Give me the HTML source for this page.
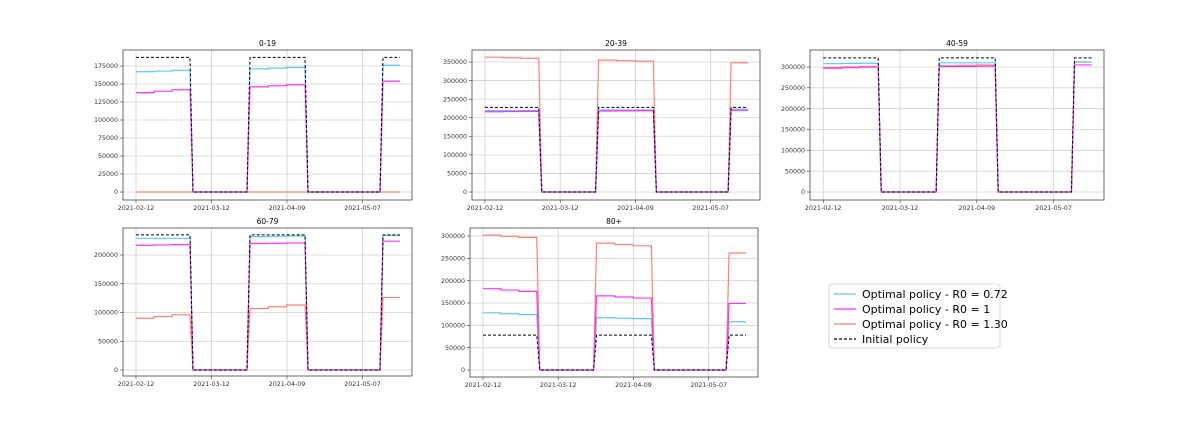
<!DOCTYPE html>
<html><head><style>body{margin:0;background:#fff}svg{display:block}text{font-family:"DejaVu Sans","Liberation Sans",sans-serif}</style></head>
<body>
<svg id="s" width="1196" height="423" xmlns="http://www.w3.org/2000/svg"></svg>
<script>
const S=document.getElementById('s');let h='';
function P(o){
 const {x0,x1,yT,yB,y0,yRef,vRef,ticks,title,series,dash}=o;
 const sy=v=>y0-(v*(y0-yRef)/vRef);
 const w=x1-x0, k=w/289;
 const X=d=>x0+d*k;
 h+=`<text x="${(x0+x1)/2}" y="${yT-4}" font-size="7.5" text-anchor="middle">${title}</text>`;
 for(let i=0;i<4;i++){const tx=X(13+75.5*i);h+=`<line x1="${tx}" y1="${yT}" x2="${tx}" y2="${yB}" stroke="#d0d0d0" stroke-width="0.8"/>`;
  h+=`<line x1="${tx}" y1="${yB}" x2="${tx}" y2="${yB+3}" stroke="#333" stroke-width="0.6"/>`;
  h+=`<text x="${tx}" y="${yB+10}" font-size="6.3" fill="#333" text-anchor="middle">${['2021-02-12','2021-03-12','2021-04-09','2021-05-07'][i]}</text>`;}
 ticks.forEach(v=>{const ty=sy(v);h+=`<line x1="${x0}" y1="${ty}" x2="${x1}" y2="${ty}" stroke="#d0d0d0" stroke-width="0.8"/><line x1="${x0-3}" y1="${ty}" x2="${x0}" y2="${ty}" stroke="#333" stroke-width="0.6"/><text x="${x0-5}" y="${ty+2.2}" font-size="6.3" fill="#333" text-anchor="end">${v}</text>`;});
 function blk(s,e,a,b){const m=(a+b)/2,t=(e-s)/3;return ` L${X(s)},${sy(a)} L${X(s+t)},${sy(a)} L${X(s+t)},${sy(m)} L${X(s+2*t)},${sy(m)} L${X(s+2*t)},${sy(b)} L${X(e)},${sy(b)}`;}
 function path(a,b,c){
  let p=`M${X(13)},${sy(a[0])}`+blk(13,67,a[0],a[1])+` L${X(70)},${y0} L${X(124)},${y0} L${X(127)},${sy(b[0])}`+blk(127,182,b[0],b[1])+` L${X(185)},${y0} L${X(257)},${y0} L${X(260)},${sy(c)} L${X(277)},${sy(c)}`;
  return p;}
 series.forEach(s=>{h+=`<path d="${path(s.a,s.b,s.c)}" fill="none" stroke="${s.col}" stroke-width="1.2"/>`;});
 h+=`<path d="${path([dash,dash],[dash,dash],dash)}" fill="none" stroke="#000" stroke-width="1" stroke-dasharray="3,2"/>`;
 h+=`<rect x="${x0}" y="${yT}" width="${w}" height="${yB-yT}" fill="none" stroke="#444" stroke-width="0.8"/>`;
}
const B='#5bc8f5',M='#ff30ff',R='#ff8070';
P({x0:123,x1:412,yT:50,yB:200,y0:192,yRef:66,vRef:175000,title:'0-19',ticks:[0,25000,50000,75000,100000,125000,150000,175000],dash:187000,
 series:[{col:R,a:[0,0],b:[0,0],c:0},{col:B,a:[167000,169000],b:[171000,173000],c:176000},{col:M,a:[138000,142000],b:[146000,149000],c:154000}]});
P({x0:472,x1:760,yT:50,yB:200,y0:192,yRef:62,vRef:350000,title:'20-39',ticks:[0,50000,100000,150000,200000,250000,300000,350000],dash:228000,
 series:[{col:R,a:[363000,360000],b:[355000,352000],c:348000},{col:B,a:[219000,219000],b:[221000,221000],c:223000},{col:M,a:[216000,217000],b:[218000,219000],c:220000}]});
P({x0:810,x1:1104,yT:50,yB:200,y0:192,yRef:67,vRef:300000,title:'40-59',ticks:[0,50000,100000,150000,200000,250000,300000],dash:322000,
 series:[{col:R,a:[299000,301000],b:[303000,305000],c:312000},{col:B,a:[308000,309000],b:[310000,310000],c:312000},{col:M,a:[297000,300000],b:[301000,302000],c:305000}]});
P({x0:123,x1:412,yT:228,yB:376,y0:370,yRef:255,vRef:200000,title:'60-79',ticks:[0,50000,100000,150000,200000],dash:235000,
 series:[{col:R,a:[90000,96000],b:[107000,113000],c:126000},{col:B,a:[229000,229000],b:[232000,233000],c:234000},{col:M,a:[217000,218000],b:[220000,221000],c:224000}]});
P({x0:470,x1:758,yT:228,yB:377,y0:370,yRef:236,vRef:300000,title:'80+',ticks:[0,50000,100000,150000,200000,250000,300000],dash:78000,
 series:[{col:R,a:[302000,297000],b:[284000,278000],c:262000},{col:B,a:[128000,124000],b:[117000,115000],c:108000},{col:M,a:[182000,176000],b:[166000,161000],c:149000}]});
h+=`<rect x="829" y="284" width="171" height="64" rx="3" fill="#fff" stroke="#ccc" stroke-width="0.8"/>`;
[[B,'Optimal policy - R0 = 0.72'],[M,'Optimal policy - R0 = 1'],[R,'Optimal policy - R0 = 1.30'],['#000','Initial policy']].forEach((e,i)=>{
 const y=294+i*15;h+=`<line x1="834" y1="${y}" x2="856" y2="${y}" stroke="${e[0]}" stroke-width="1.2" ${i==3?'stroke-dasharray="3,2"':''}/><text x="862" y="${y+4}" font-size="11">${e[1]}</text>`;});
S.innerHTML=h;
</script>
</body></html>
